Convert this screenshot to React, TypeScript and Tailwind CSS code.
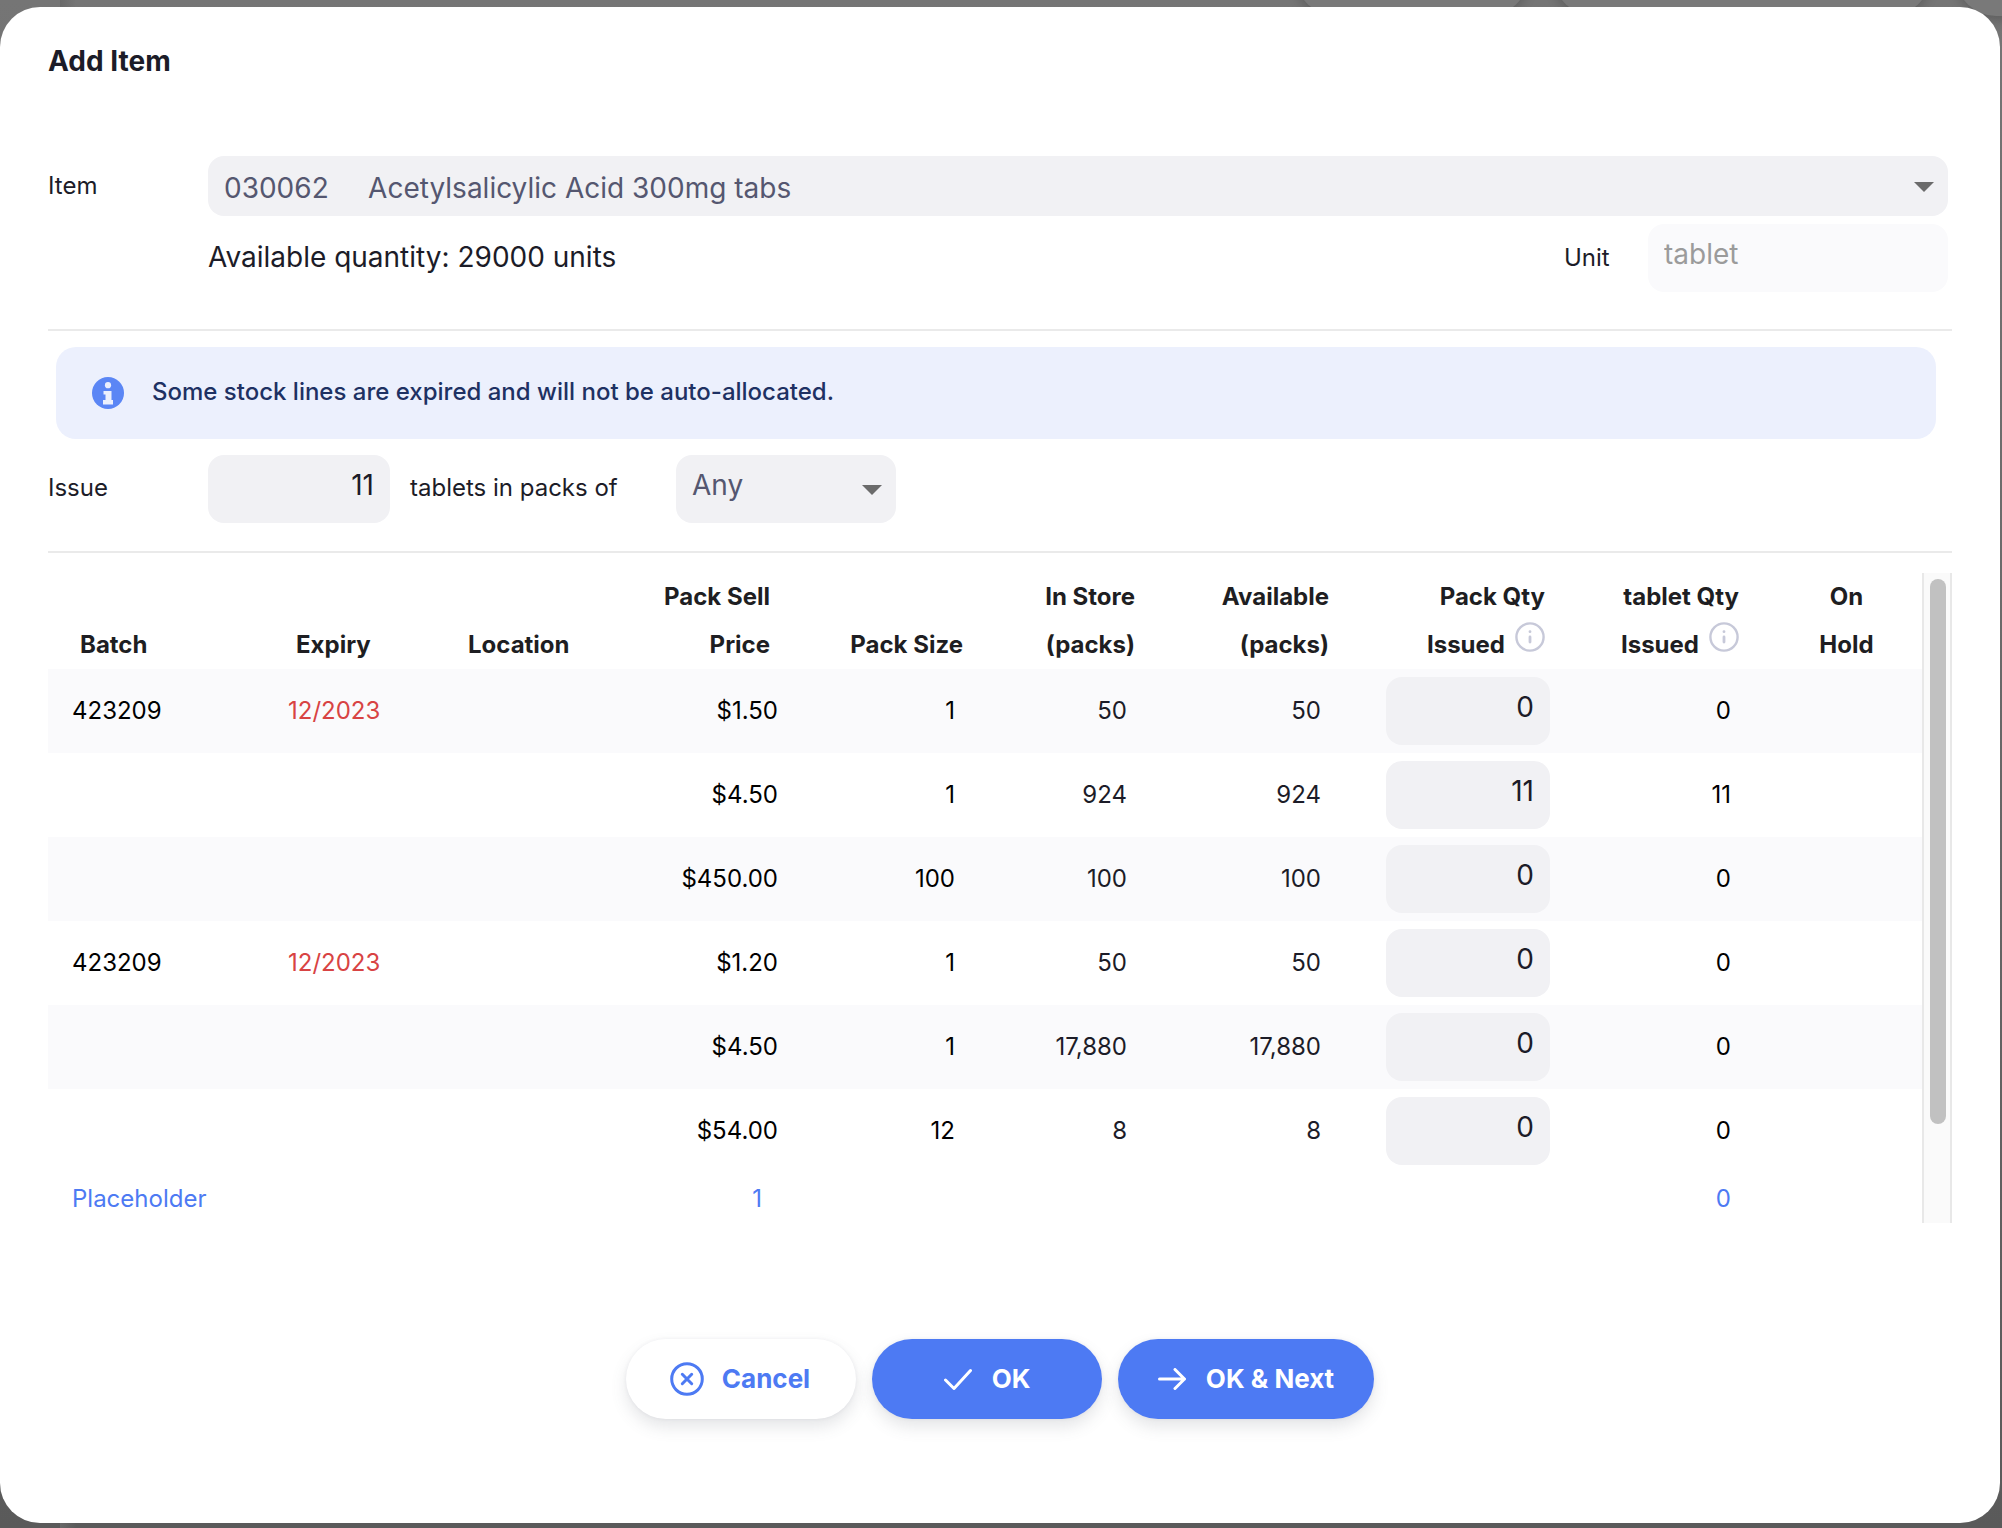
import { useState } from 'react';

interface StockLine {
  id: number;
  batch?: string;
  expiry?: string;
  price: string;
  packSize: number;
  inStore: string;
  available: string;
  issued: number;
}

const stockLines: StockLine[] = [
  { id: 1, batch: '423209', expiry: '12/2023', price: '$1.50', packSize: 1, inStore: '50', available: '50', issued: 0 },
  { id: 2, price: '$4.50', packSize: 1, inStore: '924', available: '924', issued: 11 },
  { id: 3, price: '$450.00', packSize: 100, inStore: '100', available: '100', issued: 0 },
  { id: 4, batch: '423209', expiry: '12/2023', price: '$1.20', packSize: 1, inStore: '50', available: '50', issued: 0 },
  { id: 5, price: '$4.50', packSize: 1, inStore: '17,880', available: '17,880', issued: 0 },
  { id: 6, price: '$54.00', packSize: 12, inStore: '8', available: '8', issued: 0 },
];

const buttonBase =
  'flex h-20 items-center justify-center rounded-full text-[26px] font-bold shadow-[0_8px_16px_rgba(96,97,112,0.16),0_0_4px_rgba(40,41,61,0.06)]';

function InfoOutline() {
  return (
    <svg viewBox="0 0 30 30" className="-mt-4 ml-[10px] h-[30px] w-[30px]" fill="none" stroke="#c7c9d9" strokeWidth="2.4" strokeLinecap="round" aria-hidden="true">
      <circle cx="15" cy="15" r="13.6" />
      <path d="M15 15v5M15 9.6v.1" strokeWidth="2.8" />
    </svg>
  );
}

function SelectArrow() {
  return (
    <div className="pointer-events-none absolute inset-y-0 right-[14px] flex items-center pt-[2px]">
      <svg viewBox="0 0 20 10" className="h-[10px] w-5" fill="#6b6b6b" aria-hidden="true">
        <path d="M0 0h20L10 10z" />
      </svg>
    </div>
  );
}

// Dimmed page behind the dialog
function Backdrop() {
  return (
    <div className="absolute inset-0 overflow-hidden bg-linear-to-b from-[#757575] to-[#5a5a5a]" aria-hidden="true">
      <div className="absolute top-0 left-[60px] h-full w-4 bg-linear-to-r from-[#686868] to-transparent" />
      <div className="absolute -top-16 right-[474px] h-20 w-[232px] rounded-full bg-[#797979] shadow-[0_4px_12px_rgba(0,0,0,0.2)]" />
      <div className="absolute -top-16 right-[72px] h-20 w-[376px] rounded-full bg-[#797979] shadow-[0_4px_12px_rgba(0,0,0,0.2)]" />
      <div className="absolute -top-16 -right-[180px] h-20 w-[226px] rounded-full bg-[#797979] shadow-[0_4px_12px_rgba(0,0,0,0.2)]" />
    </div>
  );
}

export default function App() {
  const [issue, setIssue] = useState('11');
  const [packs, setPacks] = useState('any');
  const [quantities, setQuantities] = useState<Record<number, string>>(
    Object.fromEntries(stockLines.map((line) => [line.id, String(line.issued)]))
  );

  return (
    <div className="relative min-h-screen pt-[7px] pr-[2px] pb-[5px] font-['Inter',sans-serif] text-2xl text-[#1c1c28]">
      <Backdrop />
      <div role="dialog" aria-labelledby="dialog-title" className="relative min-h-[calc(100vh-12px)] rounded-[40px] bg-white pr-12 pb-[104px] pl-12">
        <h1 id="dialog-title" className="pt-9 text-[28px] leading-9 font-bold">
          Add Item
        </h1>

        {/* Item */}
        <div className="mt-[77px] flex items-center pr-1">
          <label htmlFor="item" className="w-40 shrink-0">
            Item
          </label>
          <div className="relative flex-1">
            <select id="item" className="h-[60px] w-full appearance-none rounded-2xl bg-[#f1f1f4] pt-[6px] pl-4 text-[28px] whitespace-pre text-[#555770]">
              <option>{'030062\u00a0\u00a0\u00a0\u00a0 Acetylsalicylic Acid 300mg tabs'}</option>
            </select>
            <SelectArrow />
          </div>
        </div>
        <div className="mt-2 flex items-center pr-1 pl-40">
          <p className="flex-1 text-[28px]">Available quantity: 29000 units</p>
          <label htmlFor="unit" className="w-[84px]">
            Unit
          </label>
          <input
            id="unit"
            disabled
            defaultValue="tablet"
            className="h-[68px] w-[300px] rounded-2xl bg-[#fafafc] px-4 pb-2 text-[28px] text-[#9b9b9b]"
          />
        </div>

        <hr className="mt-[37px] border-t-2 border-[#eaeaea]" />

        <div role="status" className="mx-2 mt-4 mr-4 flex h-[92px] items-center rounded-[20px] bg-[#ecf0fd] px-9 font-medium text-[#1e3163]">
          <svg viewBox="0 0 32 32" className="mr-7 h-8 w-8" aria-hidden="true">
            <circle cx="16" cy="16" r="16" fill="#5b86f5" />
            <g fill="#ecf0fd">
              <circle cx="16" cy="8.2" r="3.1" />
              <path d="M11.5 14h8v9H21v4.5H11V23h2.5v-5.500h-2z" />
            </g>
          </svg>
          <p className="pb-[2px]">Some stock lines are expired and will not be auto-allocated.</p>
        </div>

        {/* Issue quantity */}
        <div className="mt-4 flex items-center">
          <label htmlFor="issue" className="w-40 pb-[2px]">
            Issue
          </label>
          <input
            id="issue"
            value={issue}
            onChange={(e) => setIssue(e.target.value)}
            className="h-[68px] w-[182px] rounded-2xl bg-[#f1f1f4] px-4 pb-2 text-right text-[28px]"
          />
          <label htmlFor="packs" className="ml-5 w-[266px] pb-[2px]">
            tablets in packs of
          </label>
          <div className="relative w-[220px]">
            <select
              id="packs"
              value={packs}
              onChange={(e) => setPacks(e.target.value)}
              className="h-[68px] w-full appearance-none rounded-2xl bg-[#f1f1f4] pb-[6px] pl-4 text-[28px] text-[#555770]"
            >
              <option value="any">Any</option>
            </select>
            <SelectArrow />
          </div>
        </div>

        <hr className="mt-7 border-t-2 border-[#eaeaea]" />

        {/* Stock lines */}
        <div className="mt-5 flex h-[650px] overflow-hidden">
          <table className="w-full flex-1 table-fixed self-start">
            <colgroup>
              <col className="w-[216px]" />
              <col className="w-[180px]" />
              <col className="w-[180px]" />
              <col className="w-[178px]" />
              <col className="w-[177px]" />
              <col className="w-[172px]" />
              <col className="w-[194px]" />
              <col className="w-[216px]" />
              <col className="w-[194px]" />
              <col className="w-[167px]" />
            </colgroup>
            <thead>
              <tr className="h-24 align-bottom leading-[48px] text-[#1e1e22]">
                <th className="pl-8 text-left">Batch</th>
                <th className="pl-8 text-left">Expiry</th>
                <th className="pl-6 text-left">Location</th>
                <th className="pr-8 text-right">
                  Pack Sell
                  <br />
                  Price
                </th>
                <th className="pr-4 text-right">Pack Size</th>
                <th className="pr-4 text-right">
                  In Store
                  <br />
                  (packs)
                </th>
                <th className="pr-4 text-right">
                  Available
                  <br />
                  (packs)
                </th>
                <th className="pr-4 text-right">
                  Pack Qty
                  <span className="flex items-center justify-end">
                    Issued
                    <InfoOutline />
                  </span>
                </th>
                <th className="pr-4 text-right">
                  tablet Qty
                  <span className="flex items-center justify-end">
                    Issued
                    <InfoOutline />
                  </span>
                </th>
                <th className="pl-4 text-center">
                  On
                  <br />
                  Hold
                </th>
              </tr>
            </thead>
            <tbody className="text-black">
              {stockLines.map((line) => (
                <tr key={line.id} className="h-[84px] odd:bg-[#fafafc]">
                  <td className="pl-6">{line.batch}</td>
                  <td className="pl-6 text-[#d84343]">{line.expiry}</td>
                  <td />
                  <td className="pr-6 text-right">{line.price}</td>
                  <td className="pr-6 text-right">{line.packSize}</td>
                  <td className="pr-6 text-right text-[#1c1c28]">{line.inStore}</td>
                  <td className="pr-6 text-right text-[#1c1c28]">{line.available}</td>
                  <td className="pr-[11px]">
                    <input
                      aria-label={`Pack quantity issued, line ${line.id}`}
                      value={quantities[line.id]}
                      onChange={(e) => setQuantities({ ...quantities, [line.id]: e.target.value })}
                      className="ml-auto block h-[68px] w-[164px] rounded-2xl bg-[#f1f1f4] px-4 pb-2 text-right text-[28px] text-[#1c1c28]"
                    />
                  </td>
                  <td className="pr-6 text-right">{Number(quantities[line.id]) * line.packSize}</td>
                  <td />
                </tr>
              ))}
              <tr className="h-[52px] text-[#4d7af3]">
                <td className="pl-6">Placeholder</td>
                <td colSpan={2} />
                <td className="pr-10 text-right">1</td>
                <td colSpan={4} />
                <td className="pr-6 text-right">0</td>
                <td />
              </tr>
            </tbody>
          </table>
          <div className="w-[30px] shrink-0 border-x-2 border-[#e8e8e8] bg-[#fafafa] px-[6px] pt-[6px]" aria-hidden="true">
            <div className="h-[545px] w-4 rounded-full bg-[#c1c1c1]" />
          </div>
        </div>

        {/* Actions */}
        <div className="mt-[116px] flex justify-center gap-4">
          <button type="button" className={`${buttonBase} w-[230px] bg-white pr-[2px] text-[#4d7af3]`}>
            <svg viewBox="0 0 34 34" className="mr-[18px] h-[34px] w-[34px]" fill="none" stroke="currentColor" strokeWidth="3" strokeLinecap="round" aria-hidden="true">
              <circle cx="17" cy="17" r="15.3" />
              <path d="M12.3 12.3l9.4 9.4M21.7 12.3l-9.4 9.4" />
            </svg>
            Cancel
          </button>
          <button type="button" className={`${buttonBase} w-[230px] bg-[#4d7af3] text-white`}>
            <svg viewBox="0 0 28 22" className="mr-5 h-[22px] w-7" fill="none" stroke="currentColor" strokeWidth="3" strokeLinecap="round" strokeLinejoin="round" aria-hidden="true">
              <path d="M1.5 12l8.5 8.500L26.500 2.500" />
            </svg>
            OK
          </button>
          <button type="button" className={`${buttonBase} w-64 bg-[#4d7af3] text-white`}>
            <svg viewBox="0 0 28 22" className="mr-5 h-[22px] w-7" fill="none" stroke="currentColor" strokeWidth="3" strokeLinecap="round" strokeLinejoin="round" aria-hidden="true">
              <path d="M1.5 11h25M17 1.5l9.500 9.500-9.500 9.500" />
            </svg>
            OK &amp; Next
          </button>
        </div>
      </div>
    </div>
  );
}
